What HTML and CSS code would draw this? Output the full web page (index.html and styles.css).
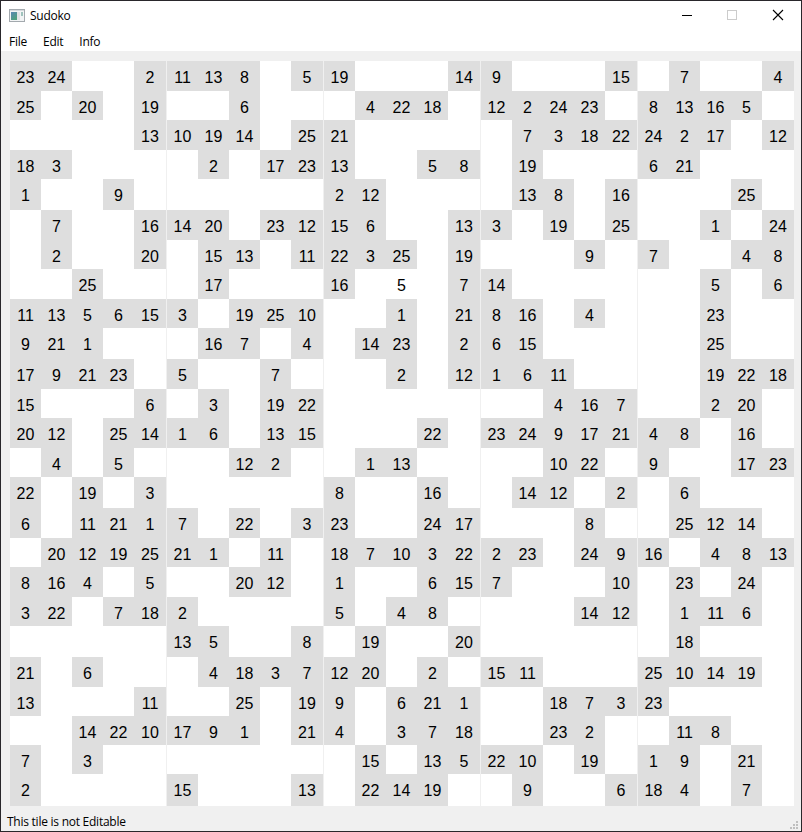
FILE: index.html
```html
<!DOCTYPE html>
<html lang="en">
<head>
<meta charset="utf-8">
<title>Sudoko</title>
<link rel="stylesheet" href="styles.css">
</head>
<body>
<div class="window">
  <header class="titlebar">
    <svg class="app-icon" width="16" height="14" viewBox="0 0 16 14">
      <defs>
        <linearGradient id="pane" x1="0" y1="0" x2="0.6" y2="1">
          <stop offset="0" stop-color="#5a87b4"/>
          <stop offset="1" stop-color="#4fa07c"/>
        </linearGradient>
      </defs>
      <rect x="0.5" y="0.5" width="15" height="12" fill="#f2f4f5" stroke="#a3a9ae"/>
      <rect x="1" y="1" width="14" height="1" fill="#d5d9dc"/>
      <rect x="2" y="3" width="6" height="8" fill="url(#pane)"/>
      <rect x="8" y="3" width="3" height="8" fill="#e0e2e4"/>
      <rect x="12" y="3" width="2" height="4" fill="#9fc3bd"/>
    </svg>
    <span class="title">Sudoko</span>
    <div class="controls">
      <svg width="46" height="28" viewBox="0 0 46 28" shape-rendering="crispEdges"><path d="M19 13.5h10" stroke="#000"/></svg>
      <svg width="46" height="28" viewBox="0 0 46 28" shape-rendering="crispEdges"><rect x="18.5" y="8.5" width="9" height="9" fill="none" stroke="#ccc"/></svg>
      <svg width="46" height="28" viewBox="0 0 46 28"><path d="M18 8l10 10M28 8l-10 10" stroke="#000" stroke-width="1.1"/></svg>
    </div>
  </header>
  <nav class="menubar"><span>File</span><span>Edit</span><span>Info</span></nav>
  <main class="board" id="board"></main>
  <footer class="statusbar">
    <span>This tile is not Editable</span>
    <svg class="grip" width="8" height="8" viewBox="0 0 8 8" fill="#bfbfbf"><path d="M6 0h2v2h-2zM3 3h2v2h-2zM6 3h2v2h-2zM0 6h2v2h-2zM3 6h2v2h-2zM6 6h2v2h-2z"/></svg>
  </footer>
</div>
<script src="board.js"></script>
</body>
</html>
```
FILE: styles.css
```css
* { box-sizing: border-box; }
body { margin: 0; background: #fff; }
.window {
  width: 802px;
  height: 832px;
  border: 1px solid #29272b;
  background: #f0f0f0;
  display: flex;
  flex-direction: column;
  font: 12px/16px "Open Sans", "Noto Sans", sans-serif;
  letter-spacing: -0.25px;
  color: #000;
}
.titlebar {
  height: 30px;
  background: #fff;
  display: flex;
  align-items: center;
  padding-left: 8px;
  flex: none;
}
.title { margin-left: 5px; }
.controls { margin-left: auto; display: flex; }
.controls svg { display: block; }
.menubar {
  height: 20px;
  flex: none;
  background: #fff;
  display: flex;
  gap: 16px;
  padding: 3px 0 0 8px;
}
.board {
  flex: none;
  margin: 10px 7px 0 9px;
  display: grid;
  grid-template-columns: repeat(5, 156px);
  column-gap: 1px;
  grid-template-rows: repeat(5, 149px);
}
.box {
  display: grid;
  grid-template-columns: repeat(4, 31px) 32px;
  grid-template-rows: 30px 29px 30px 29px 31px;
  background: #fff;
}
.box-last { grid-template-rows: 30px 29px 29px 29px 32px; }
.cell {
  padding-top: 8px;
  text-align: center;
  letter-spacing: 0;
  font: 16px/18px "Liberation Sans", Arial, sans-serif;
}
.fixed { background: #dedede; }
.statusbar {
  flex: 1;
  display: flex;
  justify-content: space-between;
  padding: 8px 3px 0 6px;
}
.grip { margin-top: 7px; }
```
FILE: board.js
```js
// One line per row; a dot is an empty tile, a trailing "e" marks an editable entry.
const rows = [
  "23 24 . . 2 11 13 8 . 5 19 . . . 14 9 . . . 15 . 7 . . 4",
  "25 . 20 . 19 . . 6 . . . 4 22 18 . 12 2 24 23 . 8 13 16 5 .",
  ". . . . 13 10 19 14 . 25 21 . . . . . 7 3 18 22 24 2 17 . 12",
  "18 3 . . . . 2 . 17 23 13 . . 5 8 . 19 . . . 6 21 . . .",
  "1 . . 9 . . . . . . 2 12 . . . . 13 8 . 16 . . . 25 .",
  ". 7 . . 16 14 20 . 23 12 15 6 . . 13 3 . 19 . 25 . . 1 . 24",
  ". 2 . . 20 . 15 13 . 11 22 3 25 . 19 . . . 9 . 7 . . 4 8",
  ". . 25 . . . 17 . . . 16 . 5e . 7 14 . . . . . . 5 . 6",
  "11 13 5 6 15 3 . 19 25 10 . . 1 . 21 8 16 . 4 . . . 23 . .",
  "9 21 1 . . . 16 7 . 4 . 14 23 . 2 6 15 . . . . . 25 . .",
  "17 9 21 23 . 5 . . 7 . . . 2 . 12 1 6 11 . . . . 19 22 18",
  "15 . . . 6 . 3 . 19 22 . . . . . . . 4 16 7 . . 2 20 .",
  "20 12 . 25 14 1 6 . 13 15 . . . 22 . 23 24 9 17 21 4 8 . 16 .",
  ". 4 . 5 . . . 12 2 . . 1 13 . . . . 10 22 . 9 . . 17 23",
  "22 . 19 . 3 . . . . . 8 . . 16 . . 14 12 . 2 . 6 . . .",
  "6 . 11 21 1 7 . 22 . 3 23 . . 24 17 . . . 8 . . 25 12 14 .",
  ". 20 12 19 25 21 1 . 11 . 18 7 10 3 22 2 23 . 24 9 16 . 4 8 13",
  "8 16 4 . 5 . . 20 12 . 1 . . 6 15 7 . . . 10 . 23 . 24 .",
  "3 22 . 7 18 2 . . . . 5 . 4 8 . . . . 14 12 . 1 11 6 .",
  ". . . . . 13 5 . . 8 . 19 . . 20 . . . . . . 18 . . .",
  "21 . 6 . . . 4 18 3 7 12 20 . 2 . 15 11 . . . 25 10 14 19 .",
  "13 . . . 11 . . 25 . 19 9 . 6 21 1 . . 18 7 3 23 . . . .",
  ". . 14 22 10 17 9 1 . 21 4 . 3 7 18 . . 23 2 . . 11 8 . .",
  "7 . 3 . . . . . . . . 15 . 13 5 22 10 . 19 . 1 9 . 21 .",
  "2 . . . . 15 . . . 13 . 22 14 19 . . 9 . . 6 18 4 . 7 ."
].map(line => line.split(" "));

const board = document.getElementById("board");
for (let b = 0; b < 25; b++) {
  const boxRow = Math.floor(b / 5);
  const box = document.createElement("div");
  box.className = boxRow === 4 ? "box box-last" : "box";
  for (let i = 0; i < 25; i++) {
    const value = rows[boxRow * 5 + Math.floor(i / 5)][(b % 5) * 5 + i % 5];
    const cell = document.createElement("div");
    cell.className = value === "." || value.endsWith("e") ? "cell" : "cell fixed";
    if (value !== ".") cell.textContent = parseInt(value, 10);
    box.appendChild(cell);
  }
  board.appendChild(box);
}
```
